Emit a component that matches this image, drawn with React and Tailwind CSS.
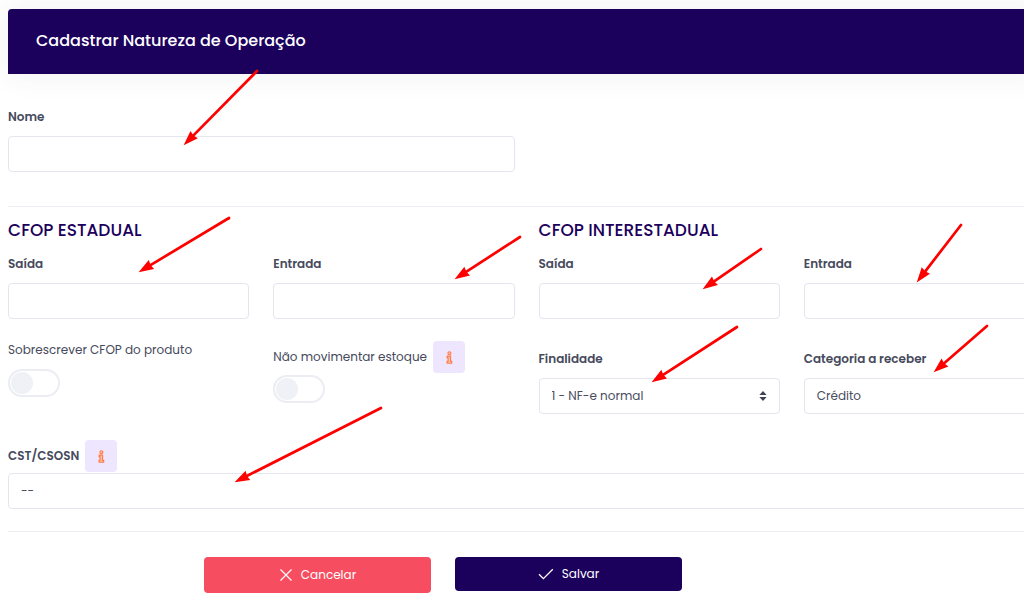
import React, { useState } from "react";

const arrows = [
  { from: [257, 71], to: [184, 145] },
  { from: [229, 218], to: [139, 272] },
  { from: [520, 237], to: [455, 279] },
  { from: [761, 249], to: [703, 289] },
  { from: [961, 225], to: [917, 282] },
  { from: [737, 327], to: [652, 382] },
  { from: [987, 326], to: [934, 372] },
  { from: [381, 408], to: [235, 482] },
];

function Arrow({ from, to }) {
  const dx = from[0] - to[0];
  const dy = from[1] - to[1];
  const angle = (Math.atan2(dy, dx) * 180) / Math.PI;

  return (
    <g transform={`translate(${to[0]} ${to[1]}) rotate(${angle})`}>
      <path
        d={`M10 0H${Math.hypot(dx, dy)}`}
        stroke="#ff0000"
        strokeWidth="2.7"
        strokeLinecap="round"
      />
      <path d="M-0.5 0L14.5 -5.2L13.5 0L14.5 5.2Z" fill="#ff0000" />
    </g>
  );
}

function Field({ id, label }) {
  const [value, setValue] = useState("");

  return (
    <div>
      <label
        htmlFor={id}
        className="mb-2 block text-xs leading-[22px] font-semibold"
      >
        {label}
      </label>
      <input
        id={id}
        type="text"
        value={value}
        onChange={(e) => setValue(e.target.value)}
        className="block h-9 w-full rounded border border-[#e4e6ef] bg-white px-3 text-xs outline-none"
      />
    </div>
  );
}

function Select({ id, options }) {
  return (
    <div className="relative">
      <select
        id={id}
        className="block h-9 w-full appearance-none rounded border border-[#e4e6ef] bg-white px-3 text-xs text-[#494d5e] outline-none"
      >
        {options.map((option) => (
          <option key={option}>{option}</option>
        ))}
      </select>
      <svg
        viewBox="0 0 8 10"
        className="pointer-events-none absolute top-[13px] right-[13px] h-[10px] w-2"
        fill="#3f4254"
      >
        <path d="M4 0L7.6 4H0.4ZM4 10L0.4 6H7.6Z" />
      </svg>
    </div>
  );
}

function Switch({ id }) {
  return (
    <input
      id={id}
      type="checkbox"
      role="switch"
      className="block h-7 w-[52px] appearance-none rounded-full border-2 border-[#ebedf3] bg-white p-px before:block before:size-[22px] before:rounded-full before:bg-[#eff1f6] checked:before:ml-6 checked:before:bg-[#1b005c]"
    />
  );
}

function InfoButton({ label }) {
  return (
    <button
      type="button"
      aria-label={label}
      className="flex size-8 shrink-0 items-center justify-center rounded bg-[#eee5ff]"
    >
      <svg
        viewBox="0 0 7 13"
        className="h-[13px] w-[7px]"
        fill="#ffc3ae"
        stroke="#ff7a45"
        strokeWidth="1.1"
      >
        <circle cx="3.4" cy="2.3" r="1.5" />
        <path d="M1.1 5.1H4.6V10.4H5.7V12.2H1.1V10.4H2.1V6.9H1.1Z" />
      </svg>
    </button>
  );
}

export default function App() {
  return (
    <div
      className="relative overflow-hidden bg-white pt-[9px] pb-[10px] pl-2 text-[#464a5c]"
      style={{ fontFamily: 'Poppins, Inter, "Open Sans", sans-serif' }}
    >
      <form className="-mr-[21px]" onSubmit={(e) => e.preventDefault()}>
        <header className="rounded-t bg-[#1b005c] px-7 pt-5 pb-[21px] shadow-[0_0_30px_rgba(82,63,105,0.08)]">
          <h1 className="text-base leading-6 font-medium text-white">
            Cadastrar Natureza de Operação
          </h1>
        </header>

        <div className="mt-8 grid grid-cols-2 gap-6">
          <Field id="nome" label="Nome" />
        </div>

        <hr className="mt-[34px] border-[#ebedf2]" />

        {/* CFOP */}
        <div className="mt-[11px] grid grid-cols-2 gap-6">
          <section>
            <h2 className="mb-[11px] text-[17px] leading-6 font-medium text-[#1b005c]">
              CFOP ESTADUAL
            </h2>
            <div className="grid grid-cols-2 gap-6">
              <Field id="estadual-saida" label="Saída" />
              <Field id="estadual-entrada" label="Entrada" />
            </div>
          </section>
          <section>
            <h2 className="mb-[11px] text-[17px] leading-6 font-medium text-[#1b005c]">
              CFOP INTERESTADUAL
            </h2>
            <div className="grid grid-cols-2 gap-6">
              <Field id="interestadual-saida" label="Saída" />
              <Field id="interestadual-entrada" label="Entrada" />
            </div>
          </section>
        </div>

        <div className="mt-5 grid grid-cols-4 gap-6">
          <div>
            <label
              htmlFor="sobrescrever"
              className="mb-2 block text-xs leading-[22px] whitespace-nowrap"
            >
              Sobrescrever CFOP do produto
            </label>
            <Switch id="sobrescrever" />
          </div>
          <div className="pt-[2px]">
            <div className="mb-[2px] flex items-center gap-1.5">
              <label
                htmlFor="estoque"
                className="text-xs leading-[22px] whitespace-nowrap"
              >
                Não movimentar estoque
              </label>
              <InfoButton label="Sobre o estoque" />
            </div>
            <Switch id="estoque" />
          </div>
          <div className="pt-[9px]">
            <label
              htmlFor="finalidade"
              className="mb-2 block text-xs leading-[22px] font-semibold"
            >
              Finalidade
            </label>
            <Select id="finalidade" options={["1 - NF-e normal"]} />
          </div>
          <div className="pt-[9px]">
            <label
              htmlFor="categoria"
              className="mb-2 block text-xs leading-[22px] font-semibold"
            >
              Categoria a receber
            </label>
            <Select id="categoria" options={["Crédito"]} />
          </div>
        </div>

        <div className="mt-[26px]">
          <div className="mb-px flex items-center gap-1.5">
            <label
              htmlFor="cst"
              className="text-xs leading-[22px] font-semibold"
            >
              CST/CSOSN
            </label>
            <InfoButton label="Sobre CST/CSOSN" />
          </div>
          <Select id="cst" options={["--"]} />
        </div>

        <hr className="mt-[22px] border-[#ebedf2]" />

        {/* Actions */}
        <div className="mt-[25px] flex items-start gap-6 pl-[196px]">
          <button
            type="button"
            className="flex h-9 w-[227px] items-center justify-center gap-2 rounded bg-[#f64e60] text-xs text-white"
          >
            <svg
              viewBox="0 0 14 14"
              className="size-[14px]"
              fill="none"
              stroke="currentColor"
              strokeWidth="1.2"
            >
              <path d="M1.5 1.5L12.5 12.5M12.5 1.5L1.5 12.5" />
            </svg>
            Cancelar
          </button>
          <button
            type="submit"
            className="flex h-[34px] w-[227px] items-center justify-center gap-2 rounded bg-[#1b005c] text-xs text-white"
          >
            <svg
              viewBox="0 0 16 12"
              className="h-3 w-4"
              fill="none"
              stroke="currentColor"
              strokeWidth="1.3"
            >
              <path d="M1 6.2L5.4 10.6L14.8 1.2" />
            </svg>
            Salvar
          </button>
        </div>
      </form>

      <svg
        viewBox="0 0 1024 603"
        className="pointer-events-none absolute top-0 left-0 h-[603px] w-[1024px]"
        fill="none"
        aria-hidden="true"
      >
        {arrows.map((arrow) => (
          <Arrow key={arrow.to.join()} {...arrow} />
        ))}
      </svg>
    </div>
  );
}
